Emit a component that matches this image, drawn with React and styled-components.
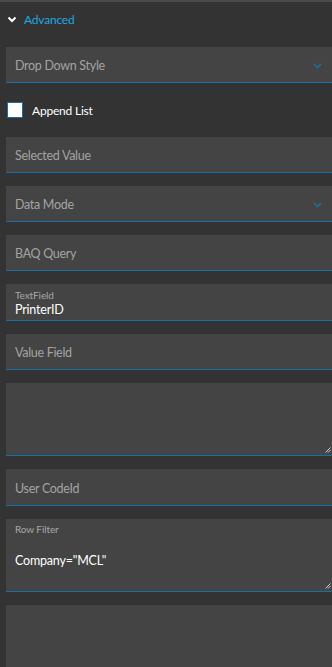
import React from 'react';
import styled, { createGlobalStyle } from 'styled-components';

const GlobalStyle = createGlobalStyle`
  html, body {
    margin: 0;
    padding: 0;
    background: #333333;
    overflow: hidden;
  }
  body {
    font-family: Lato, "Liberation Sans", sans-serif;
  }
`;

const Panel = styled.div`
  width: 332px;
  height: 667px;
  background: #333333;
  border-top: 2px solid #4a4a4a;
  box-sizing: border-box;
  overflow: hidden;
`;

const Header = styled.div`
  display: flex;
  align-items: center;
  gap: 7px;
  height: 34px;
  padding: 0 0 0 7px;
  color: #1fa7e0;
  font-size: 12px;
  letter-spacing: -0.2px;
`;

const Form = styled.div`
  display: flex;
  flex-direction: column;
  gap: 13px;
  padding: 11px 0 0 6px;
`;

const Field = styled.div`
  position: relative;
  height: ${(p) => p.h || 36}px;
  background: #444444;
  border-bottom: 1px solid #1b6ea3;
  box-sizing: border-box;
  padding: ${(p) => (p.top ? 0 : 2)}px 0 0 9px;
  display: flex;
  flex-direction: column;
  justify-content: ${(p) => (p.top ? 'flex-start' : 'center')};
`;

const Placeholder = styled.span`
  color: #a3a3a3;
  font-size: 12.5px;
  letter-spacing: -0.3px;
`;

const Label = styled.span`
  color: #a8a8a8;
  font-size: 10px;
  letter-spacing: -0.1px;
  margin-top: ${(p) => p.mt || 0}px;
`;

const Value = styled.span`
  color: #ffffff;
  font-size: 12.5px;
  letter-spacing: -0.2px;
  margin-top: ${(p) => p.mt || 0}px;
`;

const Chevron = styled.svg`
  position: absolute;
  right: 10px;
  top: 50%;
  margin-top: -2px;
`;

const Grip = styled.svg`
  position: absolute;
  right: 1px;
  bottom: 2px;
`;

const CheckRow = styled.label`
  display: flex;
  align-items: center;
  gap: 9px;
  height: 28px;
  padding-left: 1px;
  color: #ffffff;
  font-size: 12px;
  letter-spacing: -0.2px;
`;

const Box = styled.span`
  width: 16px;
  height: 16px;
  box-sizing: border-box;
  background: #ffffff;
  border: 1px solid #1b6ea3;
`;

const DropChevron = () => (
  <Chevron width="9" height="6" viewBox="0 0 9 6">
    <path d="M1 1l3.5 3.5L8 1" fill="none" stroke="#1b6ea3" strokeWidth="1.6" />
  </Chevron>
);

const ResizeGrip = () => (
  <Grip width="6" height="6" viewBox="0 0 6 6">
    <path d="M0.5 5.5L5.5 0.5M3 5.5L5.5 3" stroke="#cfcfcf" strokeWidth="1" />
  </Grip>
);

const App = () => (
  <Panel>
    <GlobalStyle />
    <Header>
      <svg width="10" height="7" viewBox="0 0 10 7">
        <path d="M1.5 1.5l3.5 3.5 3.5-3.5" fill="none" stroke="#ffffff" strokeWidth="2" />
      </svg>
      Advanced
    </Header>
    <Form>
      <Field>
        <Placeholder>Drop Down Style</Placeholder>
        <DropChevron />
      </Field>
      <CheckRow>
        <Box />
        Append List
      </CheckRow>
      <Field>
        <Placeholder>Selected Value</Placeholder>
      </Field>
      <Field>
        <Placeholder>Data Mode</Placeholder>
        <DropChevron />
      </Field>
      <Field>
        <Placeholder>BAQ Query</Placeholder>
      </Field>
      <Field h={37} top>
        <Label mt={5}>TextField</Label>
        <Value mt={1}>PrinterID</Value>
      </Field>
      <Field>
        <Placeholder>Value Field</Placeholder>
      </Field>
      <Field h={73}>
        <ResizeGrip />
      </Field>
      <Field h={37}>
        <Placeholder>User CodeId</Placeholder>
      </Field>
      <Field h={73} top>
        <Label mt={4}>Row Filter</Label>
        <Value mt={18}>Company="MCL"</Value>
        <ResizeGrip />
      </Field>
      <Field h={80} />
    </Form>
  </Panel>
);

export default App;
